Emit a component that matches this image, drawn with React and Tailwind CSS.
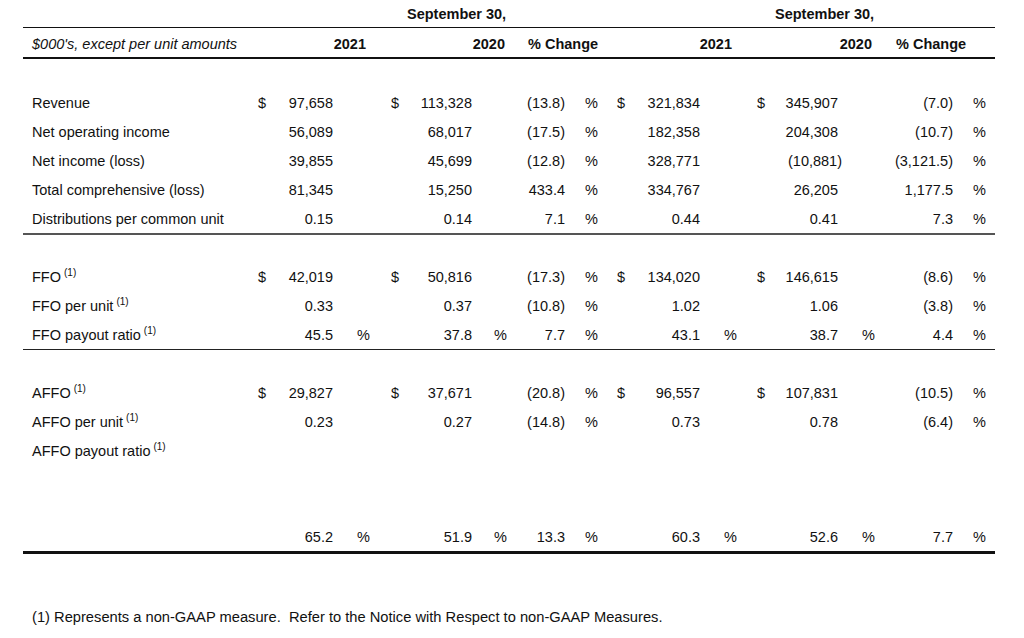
import React from 'react';

const grid =
  'grid grid-cols-[227px_30px_53px_50px_37px_52px_38px_55px_45px_30px_60px_50px_30px_58px_52px_63px_42px]';

// one class per column: label, then ($ value %) groups
const colCls = [
  'pl-[9px]',
  'pl-[8px]',
  'text-right',
  'pl-[24px]',
  'pl-[8px]',
  'text-right',
  'pl-[22px]',
  'text-right',
  'pl-[20px]',
  'pl-[7px]',
  'text-right',
  'pl-[24px]',
  'pl-[7px]',
  'text-right',
  'pl-[24px]',
  'text-right',
  'pl-[20px]',
];

const Note = () => <sup className="text-[10px] relative -top-[6px] ml-[3px]">(1)</sup>;

const Row = ({ cells, h = 'h-[29px]' }) => (
  <div className={`${grid} ${h} items-center`}>
    {cells.map((c, i) => (
      <div key={i} className={`${colCls[i]} whitespace-nowrap`}>
        {c}
      </div>
    ))}
  </div>
);

const hang = (t) => <span className="inline-block -mr-[4px]">{t}</span>;

const group1 = [
  ['Revenue', '$', '97,658', '', '$', '113,328', '', '(13.8)', '%', '$', '321,834', '', '$', '345,907', '', '(7.0)', '%'],
  ['Net operating income', '', '56,089', '', '', '68,017', '', '(17.5)', '%', '', '182,358', '', '', '204,308', '', '(10.7)', '%'],
  ['Net income (loss)', '', '39,855', '', '', '45,699', '', '(12.8)', '%', '', '328,771', '', '', hang('(10,881)'), '', '(3,121.5)', '%'],
  ['Total comprehensive (loss)', '', '81,345', '', '', '15,250', '', '433.4', '%', '', '334,767', '', '', '26,205', '', '1,177.5', '%'],
  ['Distributions per common unit', '', '0.15', '', '', '0.14', '', '7.1', '%', '', '0.44', '', '', '0.41', '', '7.3', '%'],
];

const group2 = [
  [<>FFO<Note /></>, '$', '42,019', '', '$', '50,816', '', '(17.3)', '%', '$', '134,020', '', '$', '146,615', '', '(8.6)', '%'],
  [<>FFO per unit<Note /></>, '', '0.33', '', '', '0.37', '', '(10.8)', '%', '', '1.02', '', '', '1.06', '', '(3.8)', '%'],
  [<>FFO payout ratio<Note /></>, '', '45.5', '%', '', '37.8', '%', '7.7', '%', '', '43.1', '%', '', '38.7', '%', '4.4', '%'],
];

const group3 = [
  [<>AFFO<Note /></>, '$', '29,827', '', '$', '37,671', '', '(20.8)', '%', '$', '96,557', '', '$', '107,831', '', '(10.5)', '%'],
  [<>AFFO per unit<Note /></>, '', '0.23', '', '', '0.27', '', '(14.8)', '%', '', '0.73', '', '', '0.78', '', '(6.4)', '%'],
  [<>AFFO payout ratio<Note /></>, '', '', '', '', '', '', '', '', '', '', '', '', '', '', '', ''],
];

const totals = ['', '', '65.2', '%', '', '51.9', '%', '13.3', '%', '', '60.3', '%', '', '52.6', '%', '7.7', '%'];

export default function App() {
  return (
    <div className="w-[1024px] h-[638px] bg-white text-[#111] text-[14.5px] leading-[16px] font-['Liberation_Sans',Arial,sans-serif] pl-[23px]">
      <div className="w-[972px]">
        {/* period heading */}
        <div className={`${grid} h-[28px] items-center border-b border-[#111] font-bold`}>
          <div className="col-start-2 col-end-10 pl-[157px] whitespace-nowrap">September 30,</div>
          <div className="col-start-10 col-end-18 pl-[165px] whitespace-nowrap">September 30,</div>
        </div>

        {/* column heading */}
        <div className={`${grid} h-[31px] pt-[2px] items-center border-b-2 border-[#111] font-bold`}>
          <div className="pl-[9px] italic font-normal whitespace-nowrap">$000's, except per unit amounts</div>
          <div className="col-span-3 text-right pr-[17px]">2021</div>
          <div className="col-span-3 text-right pr-[5px]">2020</div>
          <div className="col-span-2 pl-[18px] whitespace-nowrap">% Change</div>
          <div className="col-span-3 text-right pr-[18px]">2021</div>
          <div className="col-span-3 text-right pr-[18px]">2020</div>
          <div className="col-span-2 pl-[6px] whitespace-nowrap">% Change</div>
        </div>

        <div className="mt-[29px] border-b-2 border-[#555]">
          {group1.map((r, i) => (
            <Row key={i} cells={r} />
          ))}
        </div>

        <div className="mt-[27px] border-b border-[#222]">
          {group2.map((r, i) => (
            <Row key={i} cells={r} />
          ))}
        </div>

        <div className="mt-[28px]">
          {group3.map((r, i) => (
            <Row key={i} cells={r} />
          ))}
        </div>

        <div className="mt-[58px] border-b-[3px] border-[#111]">
          <Row cells={totals} h="h-[28px]" />
        </div>

        <p className="mt-[55px] pl-[9px] text-[14.7px] whitespace-pre">
          (1) Represents a non-GAAP measure.  Refer to the Notice with Respect to non-GAAP Measures.
        </p>
      </div>
    </div>
  );
}
